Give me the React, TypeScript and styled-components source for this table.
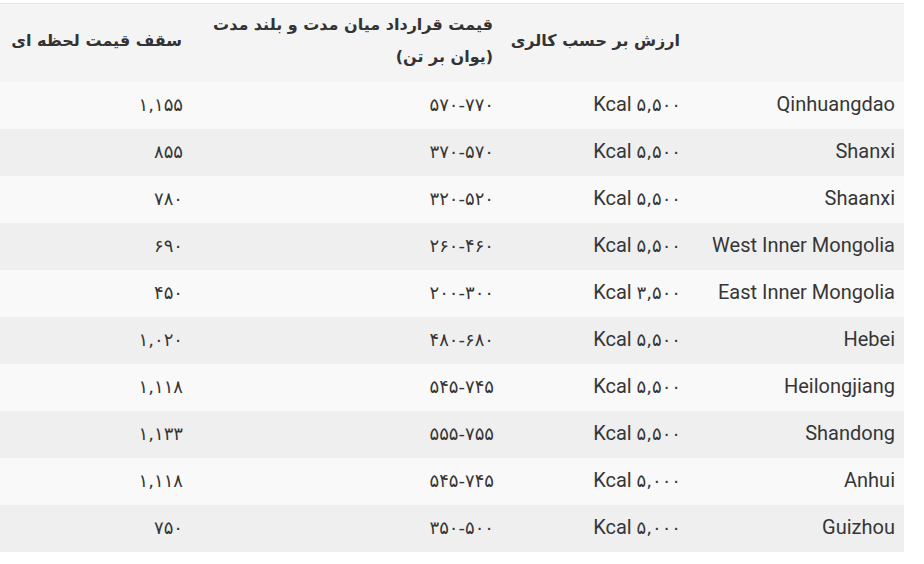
import styled, { createGlobalStyle } from "styled-components";

const GlobalStyle = createGlobalStyle`
    body {
        margin: 0;
        background: #ffffff;
        font-family: Roboto, "DejaVu Sans", sans-serif;
    }
`;

type Row = {
    region: string;
    kcal: string;
    contract: string;
    spot: string;
};

const rows: Row[] = [
    { region: "Qinhuangdao", kcal: "۵,۵۰۰", contract: "۵۷۰-۷۷۰", spot: "۱,۱۵۵" },
    { region: "Shanxi", kcal: "۵,۵۰۰", contract: "۳۷۰-۵۷۰", spot: "۸۵۵" },
    { region: "Shaanxi", kcal: "۵,۵۰۰", contract: "۳۲۰-۵۲۰", spot: "۷۸۰" },
    { region: "West Inner Mongolia", kcal: "۵,۵۰۰", contract: "۲۶۰-۴۶۰", spot: "۶۹۰" },
    { region: "East Inner Mongolia", kcal: "۳,۵۰۰", contract: "۲۰۰-۳۰۰", spot: "۴۵۰" },
    { region: "Hebei", kcal: "۵,۵۰۰", contract: "۴۸۰-۶۸۰", spot: "۱,۰۲۰" },
    { region: "Heilongjiang", kcal: "۵,۵۰۰", contract: "۵۴۵-۷۴۵", spot: "۱,۱۱۸" },
    { region: "Shandong", kcal: "۵,۵۰۰", contract: "۵۵۵-۷۵۵", spot: "۱,۱۳۳" },
    { region: "Anhui", kcal: "۵,۰۰۰", contract: "۵۴۵-۷۴۵", spot: "۱,۱۱۸" },
    { region: "Guizhou", kcal: "۵,۰۰۰", contract: "۳۵۰-۵۰۰", spot: "۷۵۰" },
];

function App() {
    return (
        <>
            <GlobalStyle />
            <Wrapper>
                <PriceTable>
                    <colgroup>
                        <col style={{ width: 214 }} />
                        <col style={{ width: 187 }} />
                        <col style={{ width: 311 }} />
                        <col style={{ width: 192 }} />
                    </colgroup>
                    <thead>
                        <tr>
                            <HeadCell></HeadCell>
                            <HeadCell>ارزش بر حسب کالری</HeadCell>
                            <HeadCell>
                                قیمت قرارداد میان مدت و بلند مدت
                                <br />
                                (یوان بر تن)
                            </HeadCell>
                            <HeadCell>سقف قیمت لحظه ای</HeadCell>
                        </tr>
                    </thead>
                    <tbody>
                        {rows.map((row, i) => (
                            <BodyRow key={row.region} $striped={i % 2 === 1}>
                                <Cell>{row.region}</Cell>
                                <Cell>
                                    <span dir="ltr">
                                        Kcal <Num>{row.kcal}</Num>
                                    </span>
                                </Cell>
                                <Cell>
                                    <Num dir="ltr">{row.contract}</Num>
                                </Cell>
                                <Cell>
                                    <Num>{row.spot}</Num>
                                </Cell>
                            </BodyRow>
                        ))}
                    </tbody>
                </PriceTable>
            </Wrapper>
        </>
    );
}

const Wrapper = styled.div`
    width: 904px;
    padding-top: 3px;
    direction: rtl;
`;

const PriceTable = styled.table`
    width: 904px;
    border-collapse: collapse;
    table-layout: fixed;
    color: #333333;
    border-top: 1px solid #e8e8e8;
`;

const HeadCell = styled.th`
    height: 74px;
    padding: 0 10px 4px 9px;
    background: #f4f4f4;
    text-align: right;
    font-family: "DejaVu Sans", Roboto, sans-serif;
    font-size: 16px;
    font-weight: bold;
    line-height: 32px;
    color: #333333;
    white-space: nowrap;
`;

const BodyRow = styled.tr<{ $striped: boolean }>`
    background: ${(p) => (p.$striped ? "#efefef" : "#f9f9f9")};
`;

const Cell = styled.td`
    height: 44px;
    padding: 0 9px 3px 9px;
    text-align: right;
    font-size: 20px;
    line-height: 22px;
    color: #363636;
    white-space: nowrap;
`;

const Num = styled.span`
    font-family: "DejaVu Sans", sans-serif;
    font-size: 18px;
    color: #363636;
`;

export default App;
